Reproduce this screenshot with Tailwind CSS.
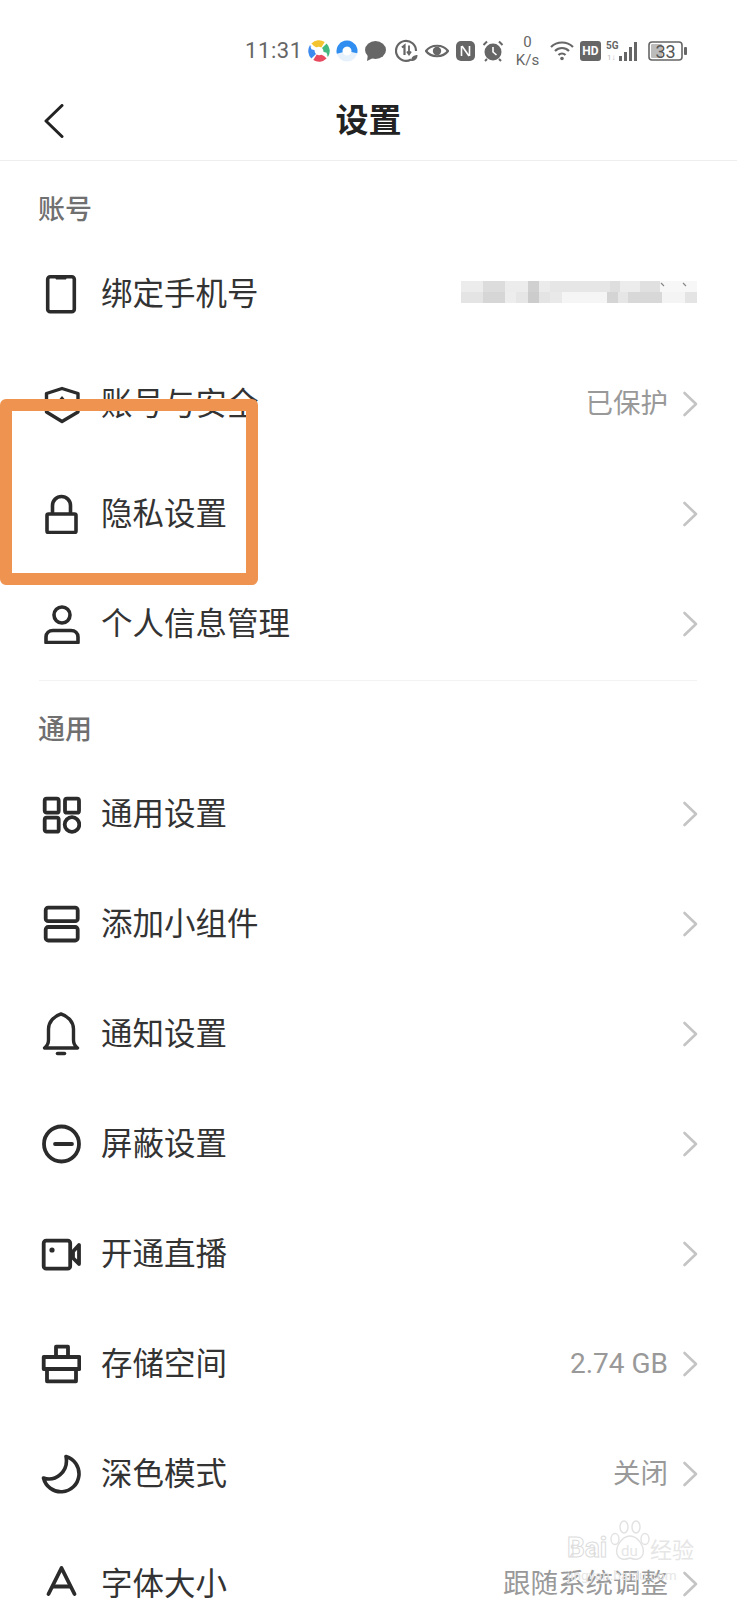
<!DOCTYPE html>
<html lang="zh-CN">
<head>
    <meta charset="UTF-8">
    <title>设置</title>
    <script src="https://cdn.jsdelivr.net/npm/@tailwindcss/browser@4"></script>
</head>
<body class="bg-white">
<div class="relative w-[737px] h-[1600px] overflow-hidden bg-white font-['Roboto','Noto_Sans_CJK_SC',sans-serif] text-[#333]">

    <!-- status bar -->
    <div class="h-[80px] pt-[36px] pl-[245px]">
        <div class="flex items-center h-[30px] text-[#666]">
            <span class="w-[55px] text-[22px] leading-none tracking-[0.6px] shrink-0">11:31</span>
            <svg class="ml-[8px] shrink-0" width="22" height="22" viewBox="0 0 22 22" fill="none" stroke-width="6.5">
                <circle cx="11" cy="11" r="7.5" stroke="#3d8bee" stroke-dasharray="10 50" transform="rotate(135 11 11)"/>
                <circle cx="11" cy="11" r="7.5" stroke="#f4c430" stroke-dasharray="10 50" transform="rotate(225 11 11)"/>
                <circle cx="11" cy="11" r="7.5" stroke="#43b97f" stroke-dasharray="10 50" transform="rotate(315 11 11)"/>
                <circle cx="11" cy="11" r="7.5" stroke="#e84a5f" stroke-dasharray="10 50" transform="rotate(45 11 11)"/>
                <path d="M3 8 C8 6 14 16 19 14" stroke="#fff" stroke-width="3.5"/>
            </svg>
            <svg class="ml-[6px] shrink-0" width="22" height="22" viewBox="0 0 22 22" fill="none">
                <circle cx="11" cy="11" r="7.5" stroke="#e6f1fb" stroke-width="6"/>
                <circle cx="11" cy="11" r="7.5" stroke="#2f8ef0" stroke-width="6" stroke-dasharray="27 50" transform="rotate(165 11 11)"/>
            </svg>
            <svg class="ml-[7px] shrink-0" width="21" height="22" viewBox="0 0 21 22" fill="#666">
                <ellipse cx="10.5" cy="10" rx="10.5" ry="9"/>
                <path d="M3 14 L2 21 L10 17Z"/>
            </svg>
            <svg class="ml-[9px] shrink-0" width="23" height="24" viewBox="0 0 23 24" fill="none" stroke="#666" stroke-width="2.2">
                <path d="M16 20.5 A10 10 0 1 1 21 12"/>
                <path d="M7 8.5 L9.5 6.5 V16"/>
                <path d="M14 6.5 V15 M12 12.5 L14 15.5 L16 12.5" stroke-width="1.8"/>
                <path d="M16 22 C16 18 19 16 22.5 16 C22.5 20 20 22 16 22Z" fill="#666" stroke="none"/>
            </svg>
            <svg class="ml-[7px] shrink-0" width="24" height="16" viewBox="0 0 24 16" fill="none" stroke="#666">
                <path d="M1 8 C6 1 18 1 23 8 C18 15 6 15 1 8Z" stroke-width="2.2"/>
                <circle cx="12" cy="8" r="4.2" fill="#666" stroke="none"/>
            </svg>
            <svg class="ml-[7px] shrink-0" width="19" height="20" viewBox="0 0 19 20">
                <rect width="19" height="20" rx="5" fill="#666"/>
                <path d="M5.5 5 V15 M13.5 5 V15 M6 5 L13 15" fill="none" stroke="#fff" stroke-width="1.6"/>
            </svg>
            <svg class="ml-[7px] shrink-0" width="22" height="22" viewBox="0 0 22 22" fill="none">
                <circle cx="11" cy="12" r="8.5" fill="#666"/>
                <path d="M1.5 5 L5 1.5 M20.5 5 L17 1.5 M5 19 L3 21 M17 19 L19 21" stroke="#666" stroke-width="2"/>
                <path d="M11 7 V12 L14.5 15" stroke="#fff" stroke-width="1.6"/>
            </svg>
            <div class="ml-[9px] w-[29px] shrink-0 text-center text-[15px] leading-[18px]">
                <div>0</div>
                <div>K/s</div>
            </div>
            <svg class="ml-[8px] shrink-0" width="24" height="22" viewBox="0 0 24 22" fill="none" stroke="#666" stroke-width="2.2">
                <path d="M1 7 C7 1 17 1 23 7"/>
                <path d="M5 11 C9 7 15 7 19 11"/>
                <path d="M8.5 15 C10.5 13 13.5 13 15.5 15"/>
                <circle cx="12" cy="18.5" r="1.8" fill="#666" stroke="none"/>
            </svg>
            <div class="ml-[6px] w-[21px] h-[20px] shrink-0 rounded-[3px] bg-[#666] text-white text-[12px] font-bold leading-[20px] text-center">HD</div>
            <svg class="ml-[5px] shrink-0" width="34" height="22" viewBox="0 0 34 22" fill="#666">
                <text x="0" y="9" font-size="10" font-weight="700" font-family="Roboto">5G</text>
                <text x="1" y="20" font-size="8" fill="#bbb" font-family="Roboto">1↓</text>
                <rect x="13" y="16" width="3" height="5"/>
                <rect x="18" y="12" width="3" height="9"/>
                <rect x="23" y="7" width="3" height="14"/>
                <rect x="28" y="2" width="3" height="19"/>
            </svg>
            <svg class="ml-[8px] shrink-0" width="39" height="20" viewBox="0 0 39 20">
                <rect x="1" y="1" width="33" height="18" rx="3" fill="#fff" stroke="#666" stroke-width="1.6"/>
                <rect x="3" y="3" width="11" height="14" rx="1" fill="#bbb"/>
                <text x="17.5" y="16.5" font-size="18" text-anchor="middle" fill="#555" font-family="Roboto">33</text>
                <rect x="36" y="6" width="3" height="8" rx="1" fill="#666"/>
            </svg>
        </div>
    </div>

    <!-- header -->
    <div class="relative h-[81px] border-b border-[#eeeeee] flex items-center justify-center">
        <svg class="absolute left-[44px] top-[24px]" width="20" height="34" viewBox="0 0 20 34" fill="none" stroke="#222" stroke-width="3" stroke-linecap="round" stroke-linejoin="round">
            <path d="M18 1.5 L2 17 L18 32.5"/>
        </svg>
        <h1 class="text-[33px] font-bold text-[#222] leading-none">设置</h1>
    </div>

    <!-- 账号 -->
    <div class="pl-[38px] pt-[32px] pb-[12px] text-[27px] leading-[34px] font-medium text-[#707070]">账号</div>

    <div class="flex items-center h-[110px]">
        <svg class="ml-[41px] shrink-0 overflow-visible" width="40" height="40" viewBox="0 0 40 40" fill="none" stroke="#2b2b2b" stroke-width="3.6" stroke-linejoin="round">
            <rect x="6.7" y="2.7" width="26.6" height="35" rx="2.5"/>
            <path d="M14 3 H26 L25 5.5 H15Z" fill="#2b2b2b" stroke="none"/>
        </svg>
        <span class="ml-[20px] pt-[2px] text-[31.5px] leading-none">绑定手机号</span>
        <svg class="ml-auto mr-[40px] mb-[4px]" width="236" height="22" viewBox="0 0 236 22" shape-rendering="crispEdges">
            <rect x="0" width="22" height="11" fill="#ececec"/><rect x="22" width="22" height="11" fill="#dcdcdc"/>
            <rect x="44" width="23" height="11" fill="#ececec"/><rect x="67" width="11" height="11" fill="#d0d0d0"/>
            <rect x="78" width="11" height="11" fill="#ebebeb"/><rect x="89" width="60" height="11" fill="#e6e6e6"/>
            <rect x="149" width="10" height="11" fill="#dedede"/><rect x="159" width="20" height="11" fill="#ececec"/>
            <rect x="179" width="20" height="11" fill="#e0e0e0"/><rect x="199" width="37" height="11" fill="#f7f7f7"/>
            <rect x="0" y="11" width="22" height="11" fill="#e4e4e4"/><rect x="22" y="11" width="22" height="11" fill="#d6d6d6"/>
            <rect x="44" y="11" width="11" height="11" fill="#ededed"/><rect x="55" y="11" width="12" height="11" fill="#e6e6e6"/>
            <rect x="67" y="11" width="11" height="11" fill="#cccccc"/><rect x="78" y="11" width="11" height="11" fill="#e4e4e4"/>
            <rect x="89" y="11" width="12" height="11" fill="#e9e9e9"/><rect x="101" y="11" width="45" height="11" fill="#f5f5f5"/>
            <rect x="146" y="11" width="11" height="11" fill="#d4d4d4"/><rect x="157" y="11" width="10" height="11" fill="#e6e6e6"/>
            <rect x="167" y="11" width="34" height="11" fill="#d8d8d8"/><rect x="201" y="11" width="23" height="11" fill="#f4f4f4"/>
            <rect x="224" y="11" width="12" height="11" fill="#e4e4e4"/>
            <path d="M200 2 L203 5 M222 2 L225 5" stroke="#888" stroke-width="1.2" shape-rendering="auto"/>
        </svg>
    </div>

    <div class="flex items-center h-[110px]">
        <svg class="ml-[41px] shrink-0" width="40" height="40" viewBox="0 0 40 40" fill="none" stroke="#2b2b2b" stroke-width="3.4" stroke-linejoin="round">
            <path d="M21 4.5 L37 9.5 V28 L21 37.5 L5.5 28 V9.5Z"/>
            <path d="M21 12 L23.5 15 H18.5Z" fill="#2b2b2b" stroke="none"/>
        </svg>
        <span class="ml-[20px] pt-[2px] text-[31.5px] leading-none">账号与安全</span>
        <span class="ml-auto text-[27.5px] leading-none text-[#999]">已保护</span>
        <svg class="ml-[14px] mr-[39px] shrink-0" width="16" height="26" viewBox="0 0 16 26" fill="none" stroke="#c4c4c4" stroke-width="2.6" stroke-linecap="round" stroke-linejoin="round"><path d="M2.5 2 L14 13 L2.5 24"/></svg>
    </div>

    <div class="flex items-center h-[110px]">
        <svg class="ml-[41px] shrink-0" width="40" height="40" viewBox="0 0 40 40" fill="none" stroke="#2b2b2b" stroke-width="3.6" stroke-linejoin="round">
            <rect x="6" y="20" width="29" height="18.5" rx="1.5"/>
            <path d="M11.5 20 V11.5 a9 9 0 0 1 18 0 V20"/>
        </svg>
        <span class="ml-[20px] pt-[2px] text-[31.5px] leading-none">隐私设置</span>
        <svg class="ml-auto mr-[39px] shrink-0" width="16" height="26" viewBox="0 0 16 26" fill="none" stroke="#c4c4c4" stroke-width="2.6" stroke-linecap="round" stroke-linejoin="round"><path d="M2.5 2 L14 13 L2.5 24"/></svg>
    </div>

    <div class="flex items-center h-[110px]">
        <svg class="ml-[41px] shrink-0" width="40" height="40" viewBox="0 0 40 40" fill="none" stroke="#2b2b2b" stroke-width="3.6" stroke-linejoin="round">
            <circle cx="21" cy="11" r="8"/>
            <path d="M5 38.5 V33 C5 29 8 26.5 12 26.5 H30 C34 26.5 37 29 37 33 V38.5Z"/>
        </svg>
        <span class="ml-[20px] pt-[2px] text-[31.5px] leading-none">个人信息管理</span>
        <svg class="ml-auto mr-[39px] shrink-0" width="16" height="26" viewBox="0 0 16 26" fill="none" stroke="#c4c4c4" stroke-width="2.6" stroke-linecap="round" stroke-linejoin="round"><path d="M2.5 2 L14 13 L2.5 24"/></svg>
    </div>

    <div class="mt-[1px] ml-[39px] mr-[40px] border-b border-[#f3f3f3]"></div>

    <!-- 通用 -->
    <div class="pl-[38px] pt-[32px] pb-[12px] text-[27px] leading-[34px] font-medium text-[#707070]">通用</div>

    <div class="flex items-center h-[110px]">
        <svg class="ml-[41px] shrink-0" width="40" height="40" viewBox="0 0 40 40" fill="none" stroke="#2b2b2b" stroke-width="3.8" stroke-linejoin="round">
            <rect x="3.7" y="4.7" width="14" height="14" rx="2"/>
            <rect x="24" y="4.7" width="14" height="14" rx="2"/>
            <rect x="3.7" y="23.7" width="14" height="14" rx="2"/>
            <circle cx="31" cy="30.5" r="7.3"/>
        </svg>
        <span class="ml-[20px] pt-[2px] text-[31.5px] leading-none">通用设置</span>
        <svg class="ml-auto mr-[39px] shrink-0" width="16" height="26" viewBox="0 0 16 26" fill="none" stroke="#c4c4c4" stroke-width="2.6" stroke-linecap="round" stroke-linejoin="round"><path d="M2.5 2 L14 13 L2.5 24"/></svg>
    </div>

    <div class="flex items-center h-[110px]">
        <svg class="ml-[41px] shrink-0" width="40" height="40" viewBox="0 0 40 40" fill="none" stroke="#2b2b2b" stroke-width="3.8" stroke-linejoin="round">
            <rect x="4.7" y="3.7" width="32" height="13.5" rx="2.5"/>
            <rect x="4.7" y="23" width="32" height="13.5" rx="2.5"/>
        </svg>
        <span class="ml-[20px] pt-[2px] text-[31.5px] leading-none">添加小组件</span>
        <svg class="ml-auto mr-[39px] shrink-0" width="16" height="26" viewBox="0 0 16 26" fill="none" stroke="#c4c4c4" stroke-width="2.6" stroke-linecap="round" stroke-linejoin="round"><path d="M2.5 2 L14 13 L2.5 24"/></svg>
    </div>

    <div class="flex items-center h-[110px]">
        <svg class="ml-[41px] shrink-0 overflow-visible" width="40" height="40" viewBox="0 0 40 40" fill="none" stroke="#2b2b2b" stroke-width="3.4" stroke-linecap="round" stroke-linejoin="round">
            <path d="M3.5 34 C6 32 7.5 30 7.5 26 V15 C7.5 8 13 2 20 0 C27 2 32.5 8 32.5 15 V26 C32.5 30 34 32 36.5 34Z"/>
            <path d="M16.5 39.5 H23.5" stroke-width="3.6"/>
        </svg>
        <span class="ml-[20px] pt-[2px] text-[31.5px] leading-none">通知设置</span>
        <svg class="ml-auto mr-[39px] shrink-0" width="16" height="26" viewBox="0 0 16 26" fill="none" stroke="#c4c4c4" stroke-width="2.6" stroke-linecap="round" stroke-linejoin="round"><path d="M2.5 2 L14 13 L2.5 24"/></svg>
    </div>

    <div class="flex items-center h-[110px]">
        <svg class="ml-[41px] shrink-0" width="40" height="40" viewBox="0 0 40 40" fill="none" stroke="#2b2b2b" stroke-width="3.8">
            <circle cx="20.5" cy="20" r="17.5"/>
            <path d="M14 20 H31" stroke-linecap="round"/>
        </svg>
        <span class="ml-[20px] pt-[2px] text-[31.5px] leading-none">屏蔽设置</span>
        <svg class="ml-auto mr-[39px] shrink-0" width="16" height="26" viewBox="0 0 16 26" fill="none" stroke="#c4c4c4" stroke-width="2.6" stroke-linecap="round" stroke-linejoin="round"><path d="M2.5 2 L14 13 L2.5 24"/></svg>
    </div>

    <div class="flex items-center h-[110px]">
        <svg class="ml-[41px] shrink-0" width="40" height="40" viewBox="0 0 40 40" fill="none" stroke="#2b2b2b" stroke-width="3.8" stroke-linejoin="round">
            <rect x="2.7" y="6.7" width="26.5" height="28" rx="2.5"/>
            <path d="M32 17.5 L38 11 V30 L32 24Z"/>
            <circle cx="11" cy="16" r="2.6" fill="#2b2b2b" stroke="none"/>
        </svg>
        <span class="ml-[20px] pt-[2px] text-[31.5px] leading-none">开通直播</span>
        <svg class="ml-auto mr-[39px] shrink-0" width="16" height="26" viewBox="0 0 16 26" fill="none" stroke="#c4c4c4" stroke-width="2.6" stroke-linecap="round" stroke-linejoin="round"><path d="M2.5 2 L14 13 L2.5 24"/></svg>
    </div>

    <div class="flex items-center h-[110px]">
        <svg class="ml-[41px] shrink-0" width="40" height="40" viewBox="0 0 40 40" fill="none" stroke="#2b2b2b" stroke-width="3.8" stroke-linejoin="round">
            <path d="M15 13 V2.7 H27 V13"/>
            <path d="M2.7 25 V13 H38.3 V25Z"/>
            <path d="M6 25 V37.3 H35 V25"/>
        </svg>
        <span class="ml-[20px] pt-[2px] text-[31.5px] leading-none">存储空间</span>
        <span class="ml-auto text-[28px] leading-none text-[#999]">2.74 GB</span>
        <svg class="ml-[14px] mr-[39px] shrink-0" width="16" height="26" viewBox="0 0 16 26" fill="none" stroke="#c4c4c4" stroke-width="2.6" stroke-linecap="round" stroke-linejoin="round"><path d="M2.5 2 L14 13 L2.5 24"/></svg>
    </div>

    <div class="flex items-center h-[110px]">
        <svg class="ml-[41px] shrink-0" width="40" height="40" viewBox="0 0 40 40" fill="none" stroke="#2b2b2b" stroke-width="3.6" stroke-linejoin="round">
            <path d="M25 2.5 A18 18 0 1 1 2.5 24 C14 28 28 18 25 2.5Z"/>
        </svg>
        <span class="ml-[20px] pt-[2px] text-[31.5px] leading-none">深色模式</span>
        <span class="ml-auto text-[27.5px] leading-none text-[#999]">关闭</span>
        <svg class="ml-[14px] mr-[39px] shrink-0" width="16" height="26" viewBox="0 0 16 26" fill="none" stroke="#c4c4c4" stroke-width="2.6" stroke-linecap="round" stroke-linejoin="round"><path d="M2.5 2 L14 13 L2.5 24"/></svg>
    </div>

    <div class="flex items-center h-[110px]">
        <svg class="ml-[41px] shrink-0" width="40" height="40" viewBox="0 0 40 40" fill="none" stroke="#2b2b2b" stroke-width="3.8" stroke-linecap="round" stroke-linejoin="round">
            <path d="M7.5 30 L20.5 4 L33.5 30"/>
            <path d="M12 22.5 H29"/>
        </svg>
        <span class="ml-[20px] pt-[2px] text-[31.5px] leading-none">字体大小</span>
        <span class="ml-auto text-[27.5px] leading-none text-[#999]">跟随系统调整</span>
        <svg class="ml-[14px] mr-[39px] shrink-0" width="16" height="26" viewBox="0 0 16 26" fill="none" stroke="#c4c4c4" stroke-width="2.6" stroke-linecap="round" stroke-linejoin="round"><path d="M2.5 2 L14 13 L2.5 24"/></svg>
    </div>

    <!-- orange highlight frame -->
    <div class="absolute left-0 top-[399px] w-[258px] h-[186px] border-[12px] border-[#ee9350] rounded-[6px]"></div>

    <!-- baidu watermark -->
    <div class="absolute left-[567px] top-[1520px] w-[132px] text-[#e6e6e6]">
        <svg class="absolute left-[43px] top-0" width="40" height="42" viewBox="0 0 40 42" fill="none" stroke="#e2e2e2" stroke-width="1.4">
            <ellipse cx="5" cy="19" rx="4" ry="5.5"/>
            <ellipse cx="14" cy="7" rx="4" ry="6"/>
            <ellipse cx="26" cy="7" rx="4" ry="6"/>
            <ellipse cx="35" cy="19" rx="4" ry="5.5"/>
            <path d="M20 16 C12 16 5 27 7 34 C9 40 15 40 20 38 C25 40 31 40 33 34 C35 27 28 16 20 16Z"/>
        </svg>
        <div class="flex items-end h-[42px] leading-none">
            <span class="w-[44px] text-[28px] font-bold text-white [-webkit-text-stroke:1px_#dcdcdc]">Bai</span>
            <span class="w-[39px] pl-[10px] pb-[3px] text-[15px]">du</span>
            <span class="text-[22px]">经验</span>
        </div>
        <div class="mt-[7px] text-[13.5px] leading-none text-[#e6e6e6] whitespace-nowrap">jingyan.baidu.com</div>
    </div>
</div>
</body>
</html>
